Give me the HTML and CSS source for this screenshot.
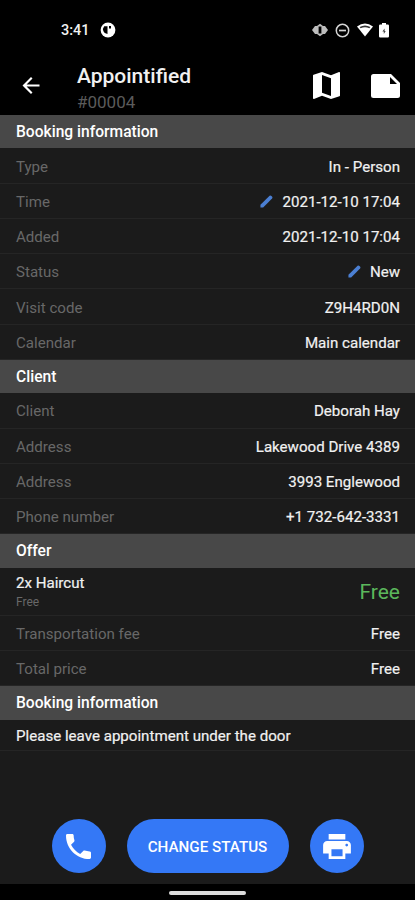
FILE: index.html
```html
<!DOCTYPE html>
<html lang="en">
<head>
<meta charset="utf-8">
<title>Appointified</title>
<link rel="stylesheet" href="styles.css">
</head>
<body>
<div class="screen">
  <div class="statusbar">
    <span class="clock">3:41</span>
    <svg class="app-dot" viewBox="0 0 16 16"><circle cx="8" cy="8" r="7.4" fill="#fff"/><path d="M4.200 4.200h3.300v7.900a4.800 4.800 0 0 1-3.300-7.900zM9 4h2v2.500H9z" fill="#000"/></svg>
    <div class="status-icons">
      <svg width="16" height="14" viewBox="0 0 16 14"><path d="M0 7l3-4h2l3-2.200 3 2.200h2l3 4-3 4h-2l-3 2.200L5 11H3z" fill="#bdbdbd"/><rect x="6.600" y="3.500" width="2.800" height="7" fill="#000"/></svg>
      <svg width="15" height="15" viewBox="0 0 15 15"><circle cx="7.500" cy="7.500" r="6.200" fill="none" stroke="#d5d5d5" stroke-width="1.500"/><path d="M4 7.500h7" stroke="#d5d5d5" stroke-width="1.700"/></svg>
      <svg width="16" height="14" viewBox="0 0 16 14"><path d="M0 3.600Q8-2.800 16 3.600L8 13.500z" fill="#fff"/><path d="M2.600 4.100Q8 .8 13.400 4.100l-1 1.200Q8 3 3.600 5.300z" fill="#333"/></svg>
      <svg width="10" height="15" viewBox="0 0 10 15"><path d="M3 0h4v1.600h1.800q1.200 0 1.200 1.200v10.500q0 1.200-1.200 1.200H1.200Q0 14.500 0 13.300V2.800q0-1.200 1.200-1.200H3z" fill="#fff"/><path d="M5.600 5.500L3.400 8.600h1.400v2.400L6.700 8H5.600z" fill="#444"/></svg>
    </div>
  </div>
  <header class="appbar">
    <svg class="back" viewBox="4 4 16 16"><path d="M20 11H7.830l5.590-5.590L12 4l-8 8 8 8 1.410-1.410L7.830 13H20v-2z" fill="#fff"/></svg>
    <div class="titles"><h1>Appointified</h1><p>#00004</p></div>
    <svg class="map" viewBox="3 3 18 18"><path d="M20.500 3l-.16.030L15 5.100 9 3 3.360 4.900c-.21.070-.36.250-.36.480V20.500c0 .28.220.5.500.5l.16-.03L9 18.900l6 2.100 5.640-1.900c.21-.07.360-.25.360-.48V3.500c0-.28-.22-.5-.5-.5zM15 19l-6-2.110V5l6 2.110V19z" fill="#fff"/></svg>
    <svg class="note" viewBox="0 0 29 24"><path d="M2.500 0H20l9 9v12.500Q29 24 26.500 24h-24Q0 24 0 21.500v-19Q0 0 2.500 0z" fill="#fff"/><path d="M19 3v7h7z" fill="#000"/></svg>
  </header>
  <main>
    <h2>Booking information</h2>
    <div class="row"><span class="label">Type</span><span class="value">In - Person</span></div>
    <div class="row"><span class="label">Time</span><span class="value"><svg class="pencil" viewBox="0 0 14 14"><path d="M.5 10.500L10.300 .9q1-.8 2 .1l.8.900q.8 1-.1 2L3.400 13.500H.5z" fill="#4b7fd2"/></svg>2021-12-10 17:04</span></div>
    <div class="row"><span class="label">Added</span><span class="value">2021-12-10 17:04</span></div>
    <div class="row"><span class="label">Status</span><span class="value"><svg class="pencil" viewBox="0 0 14 14"><path d="M.5 10.500L10.300 .9q1-.8 2 .1l.8.900q.8 1-.1 2L3.400 13.500H.5z" fill="#4b7fd2"/></svg>New</span></div>
    <div class="row"><span class="label">Visit code</span><span class="value">Z9H4RD0N</span></div>
    <div class="row"><span class="label">Calendar</span><span class="value">Main calendar</span></div>
    <h2>Client</h2>
    <div class="row"><span class="label">Client</span><span class="value">Deborah Hay</span></div>
    <div class="row"><span class="label">Address</span><span class="value">Lakewood Drive 4389</span></div>
    <div class="row"><span class="label">Address</span><span class="value">3993 Englewood</span></div>
    <div class="row"><span class="label">Phone number</span><span class="value">+1 732-642-3331</span></div>
    <h2>Offer</h2>
    <div class="row offer"><div><div class="item">2x Haircut</div><div class="item-price">Free</div></div><span class="total">Free</span></div>
    <div class="row"><span class="label">Transportation fee</span><span class="value">Free</span></div>
    <div class="row"><span class="label">Total price</span><span class="value">Free</span></div>
    <h2>Booking information</h2>
    <div class="row message"><span class="value">Please leave appointment under the door</span></div>
  </main>
  <div class="actions">
    <button class="round" aria-label="Call"><svg width="25" height="25" viewBox="3 3 18 18"><path d="M6.620 10.790c1.440 2.830 3.760 5.140 6.590 6.590l2.200-2.200c.27-.27.670-.36 1.020-.24 1.120.37 2.330.57 3.570.57.550 0 1 .45 1 1V20c0 .55-.45 1-1 1-9.390 0-17-7.610-17-17 0-.55.450-1 1-1h3.500c.55 0 1 .45 1 1 0 1.250.2 2.450.57 3.570.11.350.030.740-.25 1.020l-2.200 2.200z" fill="#fff"/></svg></button>
    <button class="change">CHANGE STATUS</button>
    <button class="round" aria-label="Print"><svg width="28" height="25" viewBox="2 3 20 18"><path d="M19 8H5c-1.660 0-3 1.340-3 3v6h4v4h12v-4h4v-6c0-1.660-1.340-3-3-3zm-3 11H8v-5h8v5zm3-7c-.55 0-1-.45-1-1s.45-1 1-1 1 .45 1 1-.45 1-1 1zm-1-9H6v4h12V3z" fill="#fff"/></svg></button>
  </div>
  <div class="navbar"><i></i></div>
</div>
</body>
</html>
```
FILE: styles.css
```css
* { box-sizing: border-box; margin: 0; padding: 0; }
body { background: #1b1b1b; font-family: Roboto, "Liberation Sans", sans-serif; color: #f1f1f1; }
.screen { width: 415px; height: 900px; display: flex; flex-direction: column; overflow: hidden; }
.statusbar { height: 60px; background: #000; display: flex; align-items: center; padding: 0 26px 0 61px; flex: none; }
.clock { font-size: 14.5px; font-weight: 500; padding-top: 1px; }
.app-dot { width: 16px; height: 16px; margin-left: 10px; }
.status-icons { margin-left: auto; display: flex; align-items: center; gap: 7px; }
.status-icons svg:nth-child(4) { margin-left: -1px; }
.appbar { height: 55px; background: #000; display: flex; padding: 0 15px 0 22px; flex: none; }
.back { width: 18px; height: 17px; margin-top: 17px; }
.titles { margin-left: 37px; }
h1 { font-size: 21px; line-height: 24px; font-weight: 500; margin-top: 4px; }
.titles p { font-size: 17px; line-height: 20px; color: #5b5b5b; margin-top: 4px; }
.map { width: 27px; height: 27px; margin: 12px 0 0 auto; }
.note { width: 29px; height: 24px; margin: 14px 0 0 31px; }
h2 { height: 33.400px; line-height: 35px; background: #484848; padding-left: 16px; font-size: 15.600px; font-weight: 500; color: #fff; }
.row { height: 35.250px; border-bottom: 1px solid #252525; padding: 2px 15px 0 16px; display: flex; align-items: center; justify-content: space-between; font-size: 15.100px; }
.label { color: #686868; }
.value, .item { -webkit-text-stroke: .2px #f1f1f1; }
.value { display: flex; align-items: center; }
.pencil { width: 13px; height: 13px; margin: -1px 9px 0 0; }
.offer { height: 48px; }
.item { line-height: 18px; }
.item-price { font-size: 12px; line-height: 16px; color: #686868; margin-top: 2px; }
.total { font-size: 21px; color: #5cb85c; }
.message { height: 31px; }
.actions { margin-top: auto; margin-bottom: 11px; display: flex; justify-content: center; gap: 21px; }
button { border: 0; background: #3478f6; color: #fff; height: 54px; font-family: inherit; display: flex; align-items: center; justify-content: center; }
.round { width: 54px; border-radius: 50%; }
.change { width: 162px; border-radius: 27px; font-size: 15.200px; font-weight: 500; padding-top: 1px; }
.navbar { height: 16px; background: #000; display: flex; justify-content: center; padding-top: 7px; flex: none; }
.navbar i { width: 77px; height: 4px; border-radius: 2px; background: #ddd; }
```
